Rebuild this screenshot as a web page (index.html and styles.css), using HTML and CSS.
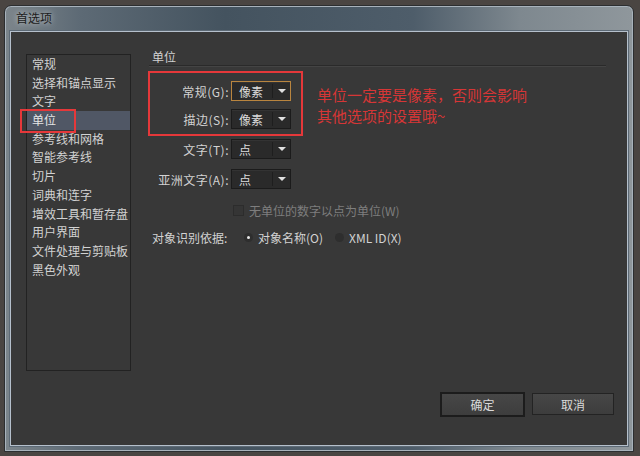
FILE: index.html
```html
<!DOCTYPE html>
<html lang="zh-CN">
<head>
  <meta charset="UTF-8">
  <title>首选项</title>
  <link rel="stylesheet" href="styles.css">
</head>
<body>
  <div class="window">
    <!-- Title bar -->
    <div class="titlebar">首选项</div>

    <div class="client">
      <div class="content">
        <!-- Category list -->
        <ul class="category-list">
          <li>常规</li>
          <li>选择和锚点显示</li>
          <li>文字</li>
          <li class="active">单位<span class="mark-box"></span></li>
          <li>参考线和网格</li>
          <li>智能参考线</li>
          <li>切片</li>
          <li>词典和连字</li>
          <li>增效工具和暂存盘</li>
          <li>用户界面</li>
          <li>文件处理与剪贴板</li>
          <li>黑色外观</li>
        </ul>

        <!-- Settings pane -->
        <div class="pane">
          <div class="pane-title">单位</div>

          <div class="marked">
            <div class="mark-group">
              <div class="row">
                <span class="label">常规(G):</span>
                <div class="select focused"><span>像素</span><i class="arrow"></i></div>
              </div>
              <div class="row">
                <span class="label">描边(S):</span>
                <div class="select"><span>像素</span><i class="arrow"></i></div>
              </div>
            </div>
            <p class="note">单位一定要是像素，否则会影响<br>其他选项的设置哦~</p>
          </div>

          <div class="row">
            <span class="label">文字(T):</span>
            <div class="select"><span>点</span><i class="arrow"></i></div>
          </div>
          <div class="row">
            <span class="label">亚洲文字(A):</span>
            <div class="select"><span>点</span><i class="arrow"></i></div>
          </div>

          <div class="check-row">
            <span class="checkbox"></span>
            <span>无单位的数字以点为单位(W)</span>
          </div>

          <div class="radio-row">
            <span class="radio-label">对象识别依据:</span>
            <span class="radio checked"></span>
            <span>对象名称(O)</span>
            <span class="radio"></span>
            <span>XML ID(X)</span>
          </div>
        </div>
      </div>

      <!-- Dialog buttons -->
      <div class="buttons">
        <button class="btn default">确定</button>
        <button class="btn">取消</button>
      </div>
    </div>
  </div>
</body>
</html>
```

FILE: styles.css
```css
* {
  margin: 0;
  padding: 0;
  box-sizing: border-box;
}

body {
  width: 640px;
  height: 456px;
  overflow: hidden;
  background-color: #4a4542;
  font-family: "Noto Sans CJK SC", "DejaVu Sans", sans-serif;
  font-size: 12px;
  color: #d2d2d2;
  padding: 5px 0 0 4px;
}

.window {
  width: 630px;
  height: 447px;
  border: 1px solid #2c2e30;
  border-radius: 7px 7px 0 0;
  padding: 0 5px 5px;
  background: linear-gradient(90deg, #7c858b 0%, #5d6a75 12%, #44535f 35%, #4e5d6a 65%, #7e888f 82%, #8f979c 100%);
  box-shadow: inset 0 0 0 1px #a8b2bb;
  display: flex;
  flex-direction: column;
}

.titlebar {
  height: 25px;
  line-height: 24px;
  padding-left: 6px;
  font-size: 12px;
  color: #1c1c1c;
  text-shadow: 0 0 6px rgba(255, 255, 255, 0.7);
}

.client {
  flex: 1;
  background-color: #383838;
  border: 1px solid #b5c0cc;
  box-shadow: 0 0 0 1px #5d6a76;
  padding: 22px 13px 28px 15px;
  display: flex;
  flex-direction: column;
}

.content {
  display: flex;
  gap: 18px;
}

/* Left category list */
.category-list {
  list-style: none;
  width: 105px;
  height: 317px;
  border: 1px solid #222;
}

.category-list li {
  position: relative;
  height: 18.7px;
  line-height: 18.7px;
  padding-left: 5px;
  white-space: nowrap;
}

.category-list li.active {
  background-color: #505765;
  color: #e6e6e6;
}

.mark-box {
  position: absolute;
  left: -7px;
  top: -2px;
  width: 56px;
  height: 24px;
  border: 2px solid #e5383a;
}

/* Right settings pane */
.pane {
  flex: 1;
  padding-right: 8px;
}

.pane-title {
  height: 12px;
  line-height: 6px;
  padding-left: 3px;
  border-bottom: 1px solid #2a2a2a;
  box-shadow: 0 1px 0 #444;
  margin-bottom: 5px;
}

.marked {
  display: flex;
  align-items: flex-start;
  gap: 14px;
  margin-left: -1px;
}

.mark-group {
  width: 155px;
  height: 65px;
  border: 2px solid #e5383a;
  padding-top: 4px;
  margin-bottom: -2px;
}

.note {
  color: #d63636;
  font-size: 15px;
  line-height: 21px;
  padding-top: 13px;
}

.row {
  display: flex;
  align-items: center;
  height: 30px;
}

.mark-group .row {
  height: 28px;
  margin-left: -1px;
}

.label {
  width: 82px;
  text-align: right;
  padding-right: 2px;
  letter-spacing: 0.5px;
}

.select {
  width: 60px;
  height: 20px;
  background-color: #2a2a2a;
  border: 1px solid #1b1b1b;
  display: flex;
  align-items: center;
  padding-left: 7px;
  box-shadow: inset 0 1px 0 #333;
}

.select.focused {
  border-color: #b9853f;
}

.select span {
  flex: 1;
  color: #dcdcdc;
}

.arrow {
  width: 18px;
  height: 14px;
  border-left: 1px solid #1e1e1e;
  position: relative;
}

.arrow::after {
  content: "";
  position: absolute;
  left: 5px;
  top: 5px;
  border-left: 4px solid transparent;
  border-right: 4px solid transparent;
  border-top: 4px solid #e0e0e0;
}

.check-row {
  display: flex;
  align-items: center;
  gap: 5px;
  height: 28px;
  padding-left: 84px;
  margin-top: 2px;
  color: #7e7e7e;
}

.checkbox {
  width: 11px;
  height: 11px;
  border: 1px solid #2c2c2c;
  background-color: #353535;
}

.radio-row {
  display: flex;
  align-items: center;
  height: 26px;
  padding-left: 3px;
}

.radio-label {
  width: 80px;
}

.radio {
  width: 9px;
  height: 9px;
  border-radius: 50%;
  background-color: #2e2e2e;
  margin-right: 5px;
  position: relative;
}

.radio.checked::after {
  content: "";
  position: absolute;
  left: 3px;
  top: 3px;
  width: 3px;
  height: 3px;
  border-radius: 50%;
  background-color: #e8e8e8;
}

.radio-row span + .radio {
  margin-left: 12px;
}

/* Bottom buttons */
.buttons {
  margin-top: auto;
  display: flex;
  justify-content: flex-end;
  gap: 7px;
}

.btn {
  width: 82px;
  height: 22px;
  font-family: inherit;
  font-size: 12px;
  color: #dadada;
  background: linear-gradient(#474747, #3d3d3d);
  border: 1px solid #232323;
}

.btn.default {
  width: 85px;
  height: 25px;
  border: 2px solid #1c1c1c;
  margin-top: -1px;
}
```
